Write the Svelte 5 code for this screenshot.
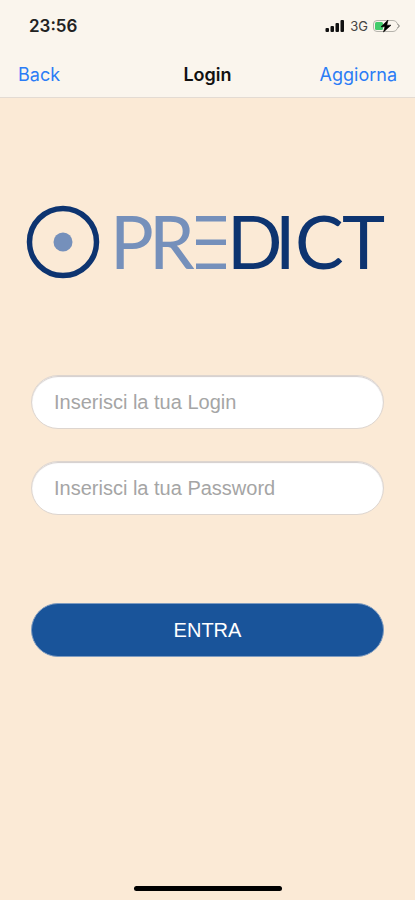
<script>
	let login = $state('');
	let password = $state('');

	const signalBars = [4, 6, 9, 12];

	function handleSubmit(event) {
		event.preventDefault();
	}
</script>

<div class="screen">
	<header class="top">
		<div class="status-bar">
			<span class="time">23:56</span>
			<div class="status-icons">
				<svg class="signal" width="20" height="12" viewBox="0 0 20 12" aria-hidden="true">
					{#each signalBars as height, i}
						<rect x={i * 5 + 0.5} y={12 - height} width="3.5" {height} rx="1" />
					{/each}
				</svg>
				<span class="network">3G</span>
				<svg class="battery" width="27" height="14" viewBox="0 0 27 14" aria-hidden="true">
					<path d="M4 1.5 H20 Q23 1.5 24 4 L26 7 L24 10 Q23 12.5 20 12.5 H4 Q0.5 12.5 0.5 9 V5 Q0.5 1.5 4 1.5 Z" fill="none" stroke="#b5b3ac" />
					<path d="M24.5 5 L26.5 7 L24.5 9" fill="none" stroke="#8f8d88" />
					<rect x="2" y="3" width="8" height="8" rx="1.5" fill="#42cc6c" />
					<path d="M15 1 L8 7.8 H12 L10.5 13 L18 6.2 H13.8 Z" fill="#000" stroke="#000" stroke-width="0.6" />
				</svg>
			</div>
		</div>
		<nav class="nav-bar">
			<a class="nav-link" href="#back">Back</a>
			<h1>Login</h1>
			<a class="nav-link right" href="#aggiorna">Aggiorna</a>
		</nav>
	</header>

	<main>
		<svg class="logo" viewBox="0 0 358 76" role="img" aria-label="PREDICT">
			<circle cx="37" cy="38" r="33.5" fill="none" stroke="#0d3470" stroke-width="5.5" />
			<circle cx="37" cy="38" r="9.5" fill="#7590bb" />
			<g class="wordmark">
				<text class="light" x="84 123" y="65">PR</text>
				<g class="light">
					<rect x="170" y="12" width="30" height="5.5" />
					<rect x="170" y="35.5" width="30" height="5.5" />
					<rect x="170" y="59.5" width="30" height="5.5" />
				</g>
				<text class="dark" x="201 249 269 316" y="65">DICT</text>
			</g>
		</svg>

		<form onsubmit={handleSubmit}>
			<input type="text" aria-label="Login" placeholder="Inserisci la tua Login" bind:value={login} />
			<input type="password" aria-label="Password" placeholder="Inserisci la tua Password" bind:value={password} />
			<button type="submit">ENTRA</button>
		</form>
	</main>

	<div class="home-indicator"></div>
</div>

<style>
	:global(body) {
		background: #fbead6;
	}

	.screen {
		display: flex;
		flex-direction: column;
		min-height: 100vh;
		background: #fbead6;
		font-family: Inter, 'Liberation Sans', sans-serif;
	}

	/* Header */
	.top {
		background: #faf5ed;
		border-bottom: 1px solid #e3dbd3;
	}

	.status-bar {
		display: flex;
		justify-content: space-between;
		align-items: center;
		height: 52px;
		padding: 0 15px 0 29px;
	}

	.time {
		font-size: 17px;
		font-weight: 600;
		color: #222;
	}

	.status-icons {
		display: flex;
		align-items: center;
		gap: 5px;
	}

	.signal {
		fill: #111;
	}

	.network {
		font-size: 13px;
		color: #444;
	}

	.nav-bar {
		display: grid;
		grid-template-columns: 1fr auto 1fr;
		align-items: center;
		height: 45px;
		padding: 0 18px;
	}

	h1 {
		margin: 0;
		font-size: 18px;
		font-weight: 600;
		color: #111;
	}

	.nav-link {
		font-size: 18px;
		color: #2b7cf6;
		text-decoration: none;
	}

	.right {
		text-align: right;
	}

	/* Content */
	main {
		flex: 1;
		padding: 106px 31px 0;
	}

	.logo {
		display: block;
		width: calc(100% + 5px);
		margin-left: -5px;
		overflow: visible;
	}

	.wordmark {
		font-family: Lato, sans-serif;
		font-size: 73px;
	}

	.light {
		fill: #7590bb;
	}

	.dark {
		fill: #0d3470;
	}

	form {
		display: flex;
		flex-direction: column;
		gap: 32px;
		margin-top: 95px;
	}

	input,
	button {
		box-sizing: border-box;
		width: 100%;
		height: 54px;
		border-radius: 27px;
		font-family: 'Liberation Sans', Arial, sans-serif;
		font-size: 20px;
	}

	input {
		padding: 0 22px;
		border: 1px solid #ddd5cf;
		background: #fff;
		box-shadow: inset 0 1px 1px #d3cecd;
		color: #333;
		outline: none;
	}

	input::placeholder {
		color: #a5a5a5;
		opacity: 1;
	}

	button {
		margin-top: 56px;
		border: 1px solid #7f9cc0;
		background: #19549a;
		color: #fff;
		cursor: pointer;
	}

	.home-indicator {
		width: 148px;
		height: 5px;
		margin: 0 auto 9px;
		border-radius: 3px;
		background: #000;
	}
</style>
